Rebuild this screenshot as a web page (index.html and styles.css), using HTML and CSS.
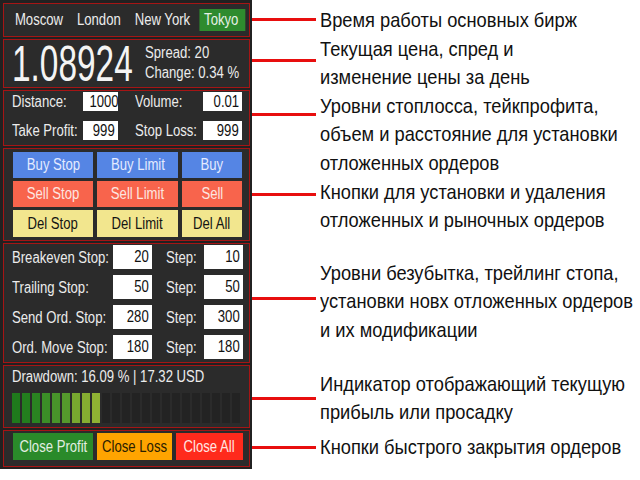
FILE: index.html
```html
<!DOCTYPE html>
<html lang="ru">
<head>
<meta charset="utf-8">
<title>Trade panel</title>
<link rel="stylesheet" href="styles.css">
</head>
<body>
<div class="page">
  <div class="panel">
    <div class="box tabs">
      <div class="tabrow">
        <span class="tab">Moscow</span>
        <span class="tab">London</span>
        <span class="tab">New York</span>
        <span class="tab active">Tokyo</span>
      </div>
    </div>
    <div class="box price">
      <div class="bigwrap"><span class="big">1.08924</span></div>
      <div class="stats">
        <span>Spread: 20</span>
        <span>Change: 0.34 %</span>
      </div>
    </div>
    <div class="box params">
      <span class="lbl"><span class="t">Distance:</span></span><span class="inp"><span class="t">1000</span></span>
      <span class="lbl lbl2"><span class="t">Volume:</span></span><span class="inp"><span class="t">0.01</span></span>
      <span class="lbl"><span class="t">Take Profit:</span></span><span class="inp"><span class="t">999</span></span>
      <span class="lbl lbl2"><span class="t">Stop Loss:</span></span><span class="inp"><span class="t">999</span></span>
    </div>
    <div class="box orders">
      <span class="btn buy"><span class="t">Buy Stop</span></span>
      <span class="btn buy"><span class="t">Buy Limit</span></span>
      <span class="btn buy"><span class="t">Buy</span></span>
      <span class="btn sell"><span class="t">Sell Stop</span></span>
      <span class="btn sell"><span class="t">Sell Limit</span></span>
      <span class="btn sell"><span class="t">Sell</span></span>
      <span class="btn del"><span class="t">Del Stop</span></span>
      <span class="btn del"><span class="t">Del Limit</span></span>
      <span class="btn del"><span class="t">Del All</span></span>
    </div>
    <div class="box stops">
      <span class="lbl"><span class="t">Breakeven Stop:</span></span><span class="inp"><span class="t">20</span></span>
      <span class="lbl lbl2"><span class="t">Step:</span></span><span class="inp"><span class="t">10</span></span>
      <span class="lbl"><span class="t">Trailing Stop:</span></span><span class="inp"><span class="t">50</span></span>
      <span class="lbl lbl2"><span class="t">Step:</span></span><span class="inp"><span class="t">50</span></span>
      <span class="lbl"><span class="t">Send Ord. Stop:</span></span><span class="inp"><span class="t">280</span></span>
      <span class="lbl lbl2"><span class="t">Step:</span></span><span class="inp"><span class="t">300</span></span>
      <span class="lbl"><span class="t">Ord. Move Stop:</span></span><span class="inp"><span class="t">180</span></span>
      <span class="lbl lbl2"><span class="t">Step:</span></span><span class="inp"><span class="t">180</span></span>
    </div>
    <div class="box drawdown">
      <div class="dd-text"><span class="t">Drawdown: 16.09 % | 17.32 USD</span></div>
      <div class="bars">
        <span class="bar g1"></span><span class="bar g2"></span><span class="bar g3"></span>
        <span class="bar g4"></span><span class="bar g5"></span><span class="bar g6"></span>
        <span class="bar g7"></span><span class="bar g8"></span><span class="bar g9"></span>
        <span class="bar"></span><span class="bar"></span><span class="bar"></span><span class="bar"></span>
        <span class="bar"></span><span class="bar"></span><span class="bar"></span><span class="bar"></span>
        <span class="bar"></span><span class="bar"></span><span class="bar"></span><span class="bar"></span>
        <span class="bar"></span><span class="bar"></span>
      </div>
    </div>
    <div class="box closes">
      <span class="btn cprofit"><span class="t">Close Profit</span></span>
      <span class="btn closs"><span class="t">Close Loss</span></span>
      <span class="btn call"><span class="t">Close All</span></span>
    </div>
  </div>
  <div class="notes">
    <div class="note n1"><span class="line"></span><div class="txt">Время работы основных бирж</div></div>
    <div class="note n2"><span class="line"></span><div class="txt">Текущая цена, спред и<br>изменение цены за день</div></div>
    <div class="note n3"><span class="line"></span><div class="txt">Уровни стоплосса, тейкпрофита,<br>объем и расстояние для установки<br>отложенных ордеров</div></div>
    <div class="note n4"><span class="line"></span><div class="txt">Кнопки для установки и удаления<br>отложенных и рыночных ордеров</div></div>
    <div class="note n5"><span class="line"></span><div class="txt">Уровни безубытка, трейлинг стопа,<br>установки новх отложенных ордеров<br>и их модификации</div></div>
    <div class="note n6"><span class="line"></span><div class="txt">Индикатор отображающий текущую<br>прибыль или просадку</div></div>
    <div class="note n7"><span class="line"></span><div class="txt">Кнопки быстрого закрытия ордеров</div></div>
  </div>
</div>
</body>
</html>
```

FILE: styles.css
```css
* { box-sizing: border-box; }
html, body { margin: 0; padding: 0; background: #ffffff; }
body {
  font-family: "Liberation Sans", Arial, sans-serif;
  width: 640px;
  height: 480px;
  overflow: hidden;
}
.page { display: flex; align-items: flex-start; width: 640px; }

/* narrowed text (the reference font is a condensed face) */
.t {
  display: inline-block;
  white-space: nowrap;
  transform: scaleX(0.82);
  transform-origin: left center;
}

.panel {
  width: 252px;
  height: 469px;
  flex: none;
  background: #212121;
  padding: 3px 2px 2px 3px;
  display: flex;
  flex-direction: column;
  gap: 2px;
  color: #ececec;
  font-size: 16px;
}
.box {
  border: 1px solid #a51515;
  background: #2b2b2b;
}

/* tabs */
.tabs { height: 34px; display: flex; align-items: center; padding-left: 6px; }
.tabrow {
  display: flex;
  gap: 5px;
  white-space: nowrap;
  transform: scaleX(0.82);
  transform-origin: left center;
}
.tab { padding: 0 6px; line-height: 22px; height: 22px; }
.tab.active { background: #2e8b2e; color: #e6f0e6; padding-right: 9px; }

/* price */
.price { height: 49px; display: flex; align-items: center; padding-left: 8px; }
.bigwrap { width: 133px; flex: none; }
.big {
  display: inline-block;
  font-size: 50px;
  line-height: 46px;
  color: #f4f4f4;
  white-space: nowrap;
  transform: scaleX(0.668);
  transform-origin: left center;
}
.stats {
  display: flex;
  flex-direction: column;
  line-height: 20px;
  padding-bottom: 2px;
  white-space: nowrap;
  transform: scaleX(0.82);
  transform-origin: left center;
}

/* params */
.params {
  height: 56px;
  display: grid;
  grid-template-columns: 71px 35px 85px 39px;
  grid-template-rows: 19px 19px;
  row-gap: 10px;
  padding: 1px 0 0 8px;
  align-items: center;
}
.lbl { white-space: nowrap; line-height: 19px; }
.lbl2 { padding-left: 17px; }
.inp {
  background: #ffffff;
  color: #111111;
  text-align: right;
  padding-right: 3px;
  height: 100%;
  line-height: 19px;
  display: block;
  white-space: nowrap;
}
.inp .t { transform-origin: right center; }

/* order buttons */
.orders {
  height: 93px;
  display: grid;
  grid-template-columns: 80px 81px 60px;
  grid-template-rows: 26px 26px 27px;
  column-gap: 4px;
  row-gap: 3px;
  padding: 3px 0 0 9px;
}
.btn {
  display: flex;
  align-items: center;
  justify-content: center;
  white-space: nowrap;
}
.btn .t { transform-origin: center center; }
.buy { background: #5585e4; color: #e4ebff; }
.sell { background: #f8644c; color: #fde6e0; }
.del { background: #f2e68e; color: #141414; }

/* stops */
.stops {
  height: 120px;
  display: grid;
  grid-template-columns: 101px 39px 52px 39px;
  grid-template-rows: repeat(4, 24px);
  row-gap: 6px;
  padding: 1px 0 0 8px;
  align-items: center;
}
.stops .lbl2 { padding-left: 14px; }
.stops .inp { line-height: 24px; }

/* drawdown */
.drawdown { height: 63px; padding: 2px 0 0 8px; }
.dd-text { line-height: 18px; white-space: nowrap; }
.bars { display: flex; gap: 2px; margin-top: 7px; height: 30px; }
.bar { width: 8px; height: 30px; background: #232323; }
.g1 { background: #1f7a1c; }
.g2 { background: #237e1e; }
.g3 { background: #2a8421; }
.g4 { background: #3b8e27; }
.g5 { background: #48942a; }
.g6 { background: #55992c; }
.g7 { background: #78a82f; }
.g8 { background: #86ad31; }
.g9 { background: #8fb233; }

/* close buttons */
.closes {
  height: 37px;
  display: flex;
  gap: 4px;
  padding: 2px 0 0 9px;
}
.closes .btn { height: 27px; }
.cprofit { width: 80px; background: #2a8a2a; color: #e2eee2; }
.closs { width: 75px; background: #ffa400; color: #2a2000; }
.call { width: 67px; background: #ff2a1c; color: #ffe6e2; }

/* annotations */
.notes {
  flex: 1;
  min-width: 0;
  overflow: hidden;
  display: flex;
  flex-direction: column;
  padding-top: 6px;
  font-size: 21px;
  line-height: 28.6px;
  color: #111111;
}
.note { display: flex; align-items: flex-start; }
.line { width: 64px; height: 3px; background: #e80e0e; flex: none; }
.txt {
  margin-left: 4px;
  white-space: nowrap;
  transform: scaleX(0.87);
  transform-origin: left top;
}
.n1 .line { margin-top: 12px; }
.n2 .line { margin-top: 24px; }
.n3 .line { margin-top: 21px; }
.n4 .line { margin-top: 15px; }
.n5 { margin-top: 24px; }
.n5 .line { margin-top: 38px; }
.n6 { margin-top: 25px; }
.n6 .line { margin-top: 27px; }
.n7 { margin-top: 6px; }
.n7 .line { margin-top: 13px; }
```
